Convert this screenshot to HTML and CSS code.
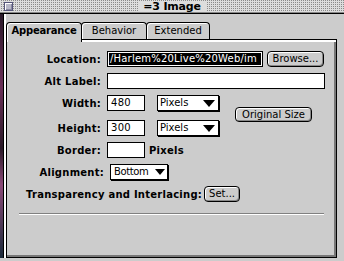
FILE: index.html
```html
<!DOCTYPE html>
<html>
<head>
    <title>Image</title>
    <link rel="stylesheet" href="styles.css">
</head>
<body>
    <div class="window">
        <div class="titlebar">
            <span class="close-box"></span>
            <span class="title">=3 Image</span>
        </div>
        <div class="main">
            <div class="desk-edge"></div>
            <div class="frame">
                <div class="tabs">
                    <div class="tab active">Appearance</div>
                    <div class="tab">Behavior</div>
                    <div class="tab">Extended</div>
                </div>
                <div class="panel">
                    <div class="form">
                        <div class="row">
                            <span class="label">Location:</span>
                            <div class="field field-location"><span class="selected">/Harlem%20Live%20Web/im</span></div>
                            <span class="btn btn-browse">Browse...</span>
                        </div>
                        <div class="row">
                            <span class="label">Alt Label:</span>
                            <div class="field field-wide"></div>
                        </div>
                        <div class="size-group">
                            <div class="size-rows">
                                <div class="row">
                                    <span class="label">Width:</span>
                                    <div class="field field-small">480</div>
                                    <div class="popup popup-units">Pixels<span class="arrow"></span></div>
                                </div>
                                <div class="row">
                                    <span class="label">Height:</span>
                                    <div class="field field-small">300</div>
                                    <div class="popup popup-units">Pixels<span class="arrow"></span></div>
                                </div>
                            </div>
                            <span class="btn btn-original">Original Size</span>
                        </div>
                        <div class="row">
                            <span class="label">Border:</span>
                            <div class="field field-small"></div>
                            <span class="unit">Pixels</span>
                        </div>
                        <div class="row">
                            <span class="label label-align">Alignment:</span>
                            <div class="popup popup-align">Bottom<span class="arrow"></span></div>
                        </div>
                        <div class="row row-trans">
                            <span class="label-plain">Transparency and Interlacing:</span>
                            <span class="btn btn-set">Set...</span>
                        </div>
                        <div class="separator"></div>
                    </div>
                </div>
            </div>
        </div>
    </div>
</body>
</html>
```

FILE: styles.css
```css
html, body {
    margin: 0;
    padding: 0;
    background-color: #cccccc;
    width: 344px;
    height: 261px;
    overflow: hidden;
    font-family: "DejaVu Sans", sans-serif;
    font-size: 10px;
    color: #000;
}

.window {
    width: 344px;
    height: 261px;
}

/* title bar */

.titlebar {
    height: 13px;
    border-bottom: 1px solid #000;
    box-shadow: inset 0 -1px 0 #888;
    background-color: #dddddd;
    background-image: conic-gradient(#8a8a8a 0 25%, transparent 0);
    background-size: 2px 2px;
    display: grid;
    grid-template-columns: 1fr auto 1fr;
    align-items: center;
}

.close-box {
    justify-self: start;
    margin-left: 4px;
    margin-top: -1px;
    width: 7px;
    height: 7px;
    border: 1px solid #55557a;
    background-color: #b8b8c8;
    box-shadow: inset 1px 1px 0 #fff, inset -1px -1px 0 #8888a0;
}

.title {
    background-color: #dddddd;
    padding: 0 5px;
    height: 11px;
    line-height: 11px;
    margin-top: -1px;
    font-weight: bold;
    font-size: 11px;
    letter-spacing: -0.2px;
}

/* window body */

.main {
    display: flex;
    height: 244px;
}

.desk-edge {
    width: 3px;
    background: linear-gradient(to bottom, #2a1a2a, #6a3058 30%, #2a1a28 55%, #8a4a78 70%, #1a2a3a);
}

.frame {
    flex: 1;
    border-left: 1px solid #000;
    padding-left: 2px;
    box-shadow: inset 2px 0 0 #fff;
    background-color: #cccccc;
}

.tabs {
    display: flex;
    align-items: flex-start;
    padding-top: 8px;
    position: relative;
    z-index: 1;
}

.tab {
    box-sizing: border-box;
    height: 17px;
    line-height: 15px;
    border: 1px solid #000;
    border-bottom: none;
    border-radius: 4px 4px 0 0;
    background-color: #cccccc;
    box-shadow: inset 1px 1px 0 #fff;
    text-align: center;
    margin-left: -1px;
}

.tab:first-child {
    margin-left: 0;
}

.tab.active {
    width: 76px;
    height: 20px;
    margin-bottom: -3px;
    font-weight: bold;
    letter-spacing: -0.2px;
    position: relative;
    z-index: 2;
}

.tab:nth-child(2) {
    width: 66px;
}

.tab:nth-child(3) {
    width: 64px;
}

.panel {
    box-sizing: border-box;
    width: 331px;
    height: 219px;
    border: 1px solid #000;
    box-shadow: inset 0 2px 0 #fff, inset -2px -2px 0 #777;
}

/* form */

.form {
    padding-top: 11px;
    display: flex;
    flex-direction: column;
    gap: 6px;
}

.row {
    display: flex;
    align-items: center;
    height: 16px;
}

.label {
    width: 94px;
    margin-right: 6px;
    text-align: right;
    font-weight: bold;
    letter-spacing: 0.25px;
    white-space: nowrap;
}

.label-align {
    width: 97px;
}

.label-plain, .unit {
    font-weight: bold;
    letter-spacing: 0.25px;
    white-space: nowrap;
}

.unit {
    margin-left: 4px;
}

.field {
    box-sizing: border-box;
    height: 16px;
    border: 1px solid #000;
    background-color: #fff;
    padding: 0 3px;
    line-height: 14px;
    letter-spacing: 0.3px;
    white-space: nowrap;
    overflow: hidden;
}

.field-location {
    width: 156px;
    padding: 1px;
}

.field-location .selected {
    display: block;
    height: 12px;
    line-height: 12px;
    background-color: #000;
    color: #fff;
    padding-left: 1px;
    letter-spacing: 0.2px;
    overflow: hidden;
}

.field-wide {
    width: 218px;
}

.field-small {
    width: 38px;
}

.btn {
    box-sizing: border-box;
    height: 16px;
    line-height: 12px;
    border: 1px solid #000;
    border-radius: 4px;
    background-color: #cccccc;
    box-shadow: inset 1px 1px 0 #fff, inset -1px -1px 0 #888;
    text-align: center;
    padding-top: 1px;
    white-space: nowrap;
}

.btn-browse {
    width: 57px;
    margin-left: 4px;
}

.size-group {
    display: flex;
    align-items: center;
}

.size-rows {
    display: flex;
    flex-direction: column;
    gap: 9px;
}

.btn-original {
    width: 77px;
    height: 15px;
    margin-left: 16px;
    margin-bottom: 3px;
}

.btn-set {
    width: 36px;
    margin-left: 2px;
}

.popup {
    box-sizing: border-box;
    height: 16px;
    border: 1px solid #000;
    box-shadow: 1px 1px 0 #000;
    background-color: #fff;
    line-height: 14px;
    padding-left: 2px;
    display: flex;
    align-items: center;
    justify-content: space-between;
}

.popup-units {
    width: 62px;
    margin-left: 12px;
}

.popup-align {
    width: 58px;
    padding-left: 3px;
    letter-spacing: -0.4px;
}

.arrow {
    width: 0;
    height: 0;
    border-left: 6px solid transparent;
    border-right: 6px solid transparent;
    border-top: 7px solid #000;
    margin-right: 3px;
}

.popup-align .arrow {
    margin-right: 2px;
    border-left-width: 5px;
    border-right-width: 5px;
    border-top-width: 6px;
}

.row-trans {
    padding-left: 19px;
}

.separator {
    margin: 5px 12px 0 12px;
    height: 0;
    border-top: 1px solid #808080;
    border-bottom: 1px solid #fff;
}
```
